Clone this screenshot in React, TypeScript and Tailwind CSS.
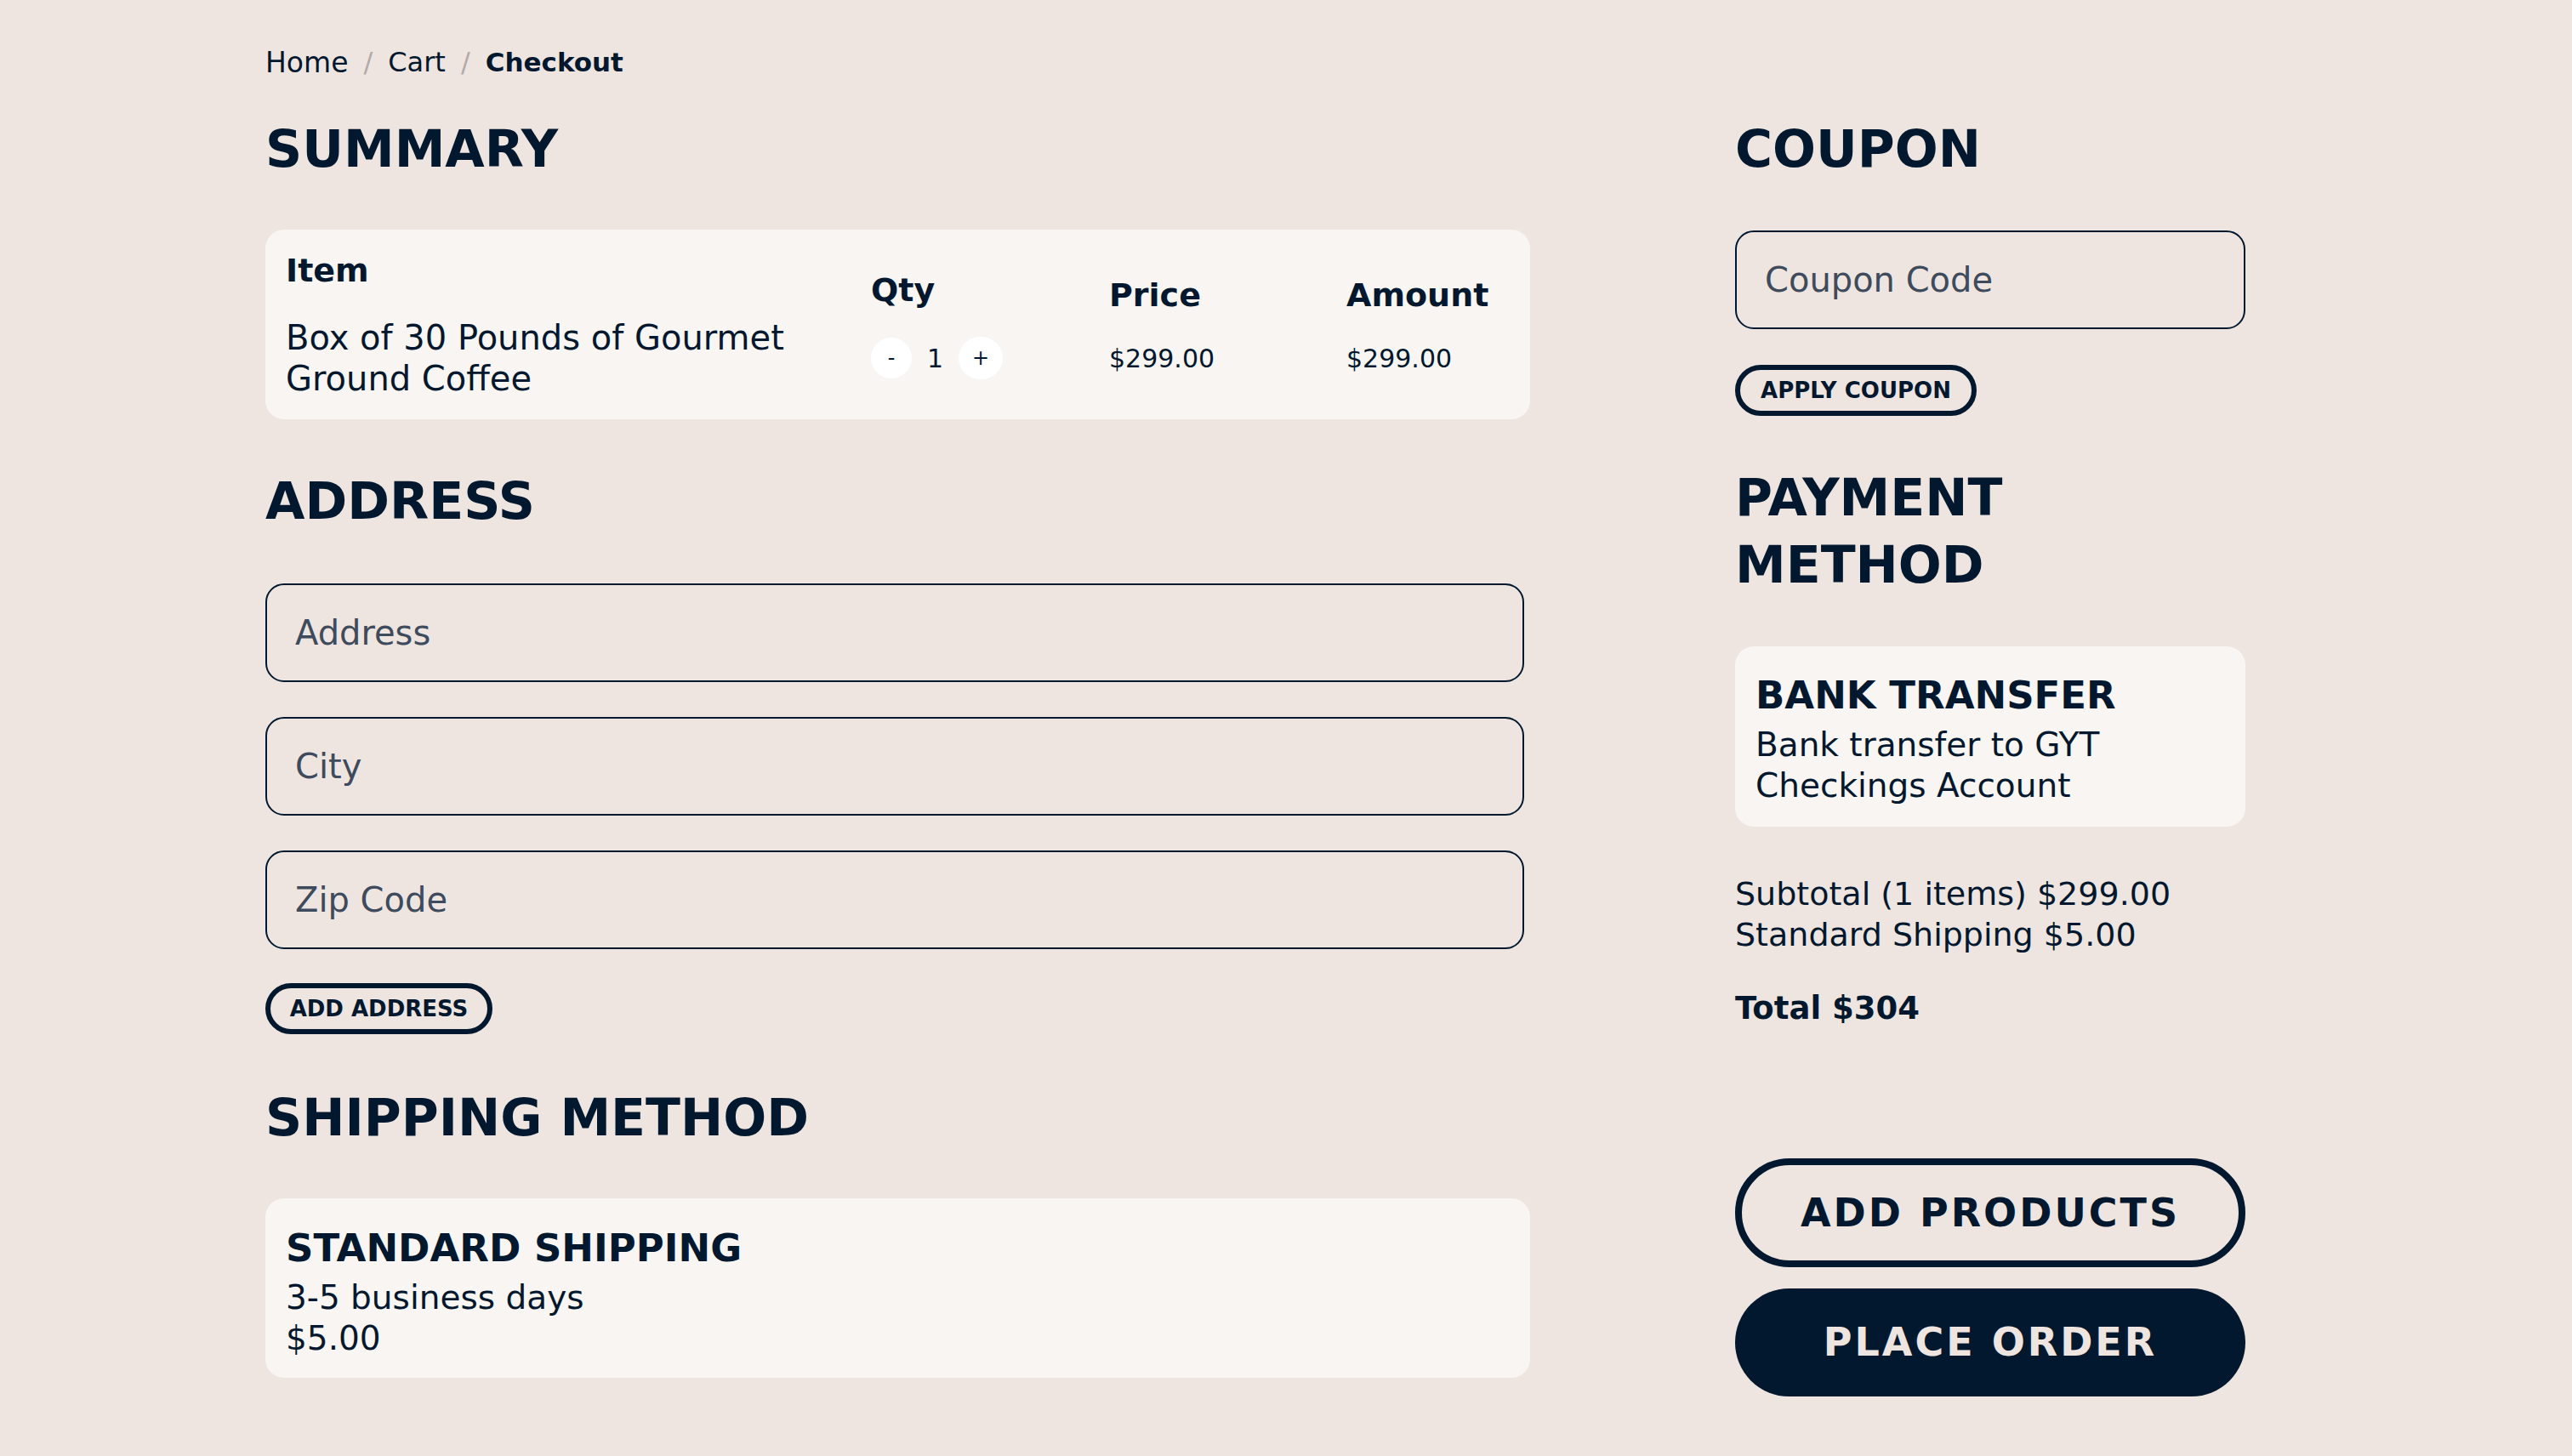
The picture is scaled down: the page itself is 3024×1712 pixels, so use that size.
import React from "react";

const font = { fontFamily: '"DejaVu Sans", "Noto Sans", sans-serif' };

const Heading: React.FC<{ children: React.ReactNode; className?: string }> = ({
  children,
  className = "",
}) => (
  <h2 className={`text-[60px] font-bold leading-[78px] text-[#02182e] ${className}`}>
    {children}
  </h2>
);

const Field: React.FC<{ placeholder: string; className?: string }> = ({
  placeholder,
  className = "",
}) => (
  <input
    placeholder={placeholder}
    className={`h-[116px] rounded-[22px] border-2 border-[#02182e] bg-transparent px-[33px] text-[40px] text-[#02182e] outline-none placeholder:text-[#3d4b5c] ${className}`}
  />
);

const PillButton: React.FC<{ children: React.ReactNode; className?: string }> = ({
  children,
  className = "",
}) => (
  <button
    className={`flex h-[60px] items-center justify-center whitespace-nowrap rounded-full border-[6px] border-[#02182e] text-[26px] font-bold text-[#02182e] ${className}`}
  >
    {children}
  </button>
);

export default function App() {
  return (
    <div
      className="min-h-[1712px] w-full bg-[#efe5e0] pl-[312px] pt-[54px] text-[#02182e]"
      style={font}
    >
      {/* breadcrumb */}
      <nav className="flex items-center gap-[18px] text-[32px] leading-[39px]">
        <span className="text-[33px]">Home</span>
        <span className="text-[#b3aba8]">/</span>
        <span>Cart</span>
        <span className="text-[#b3aba8]">/</span>
        <span className="text-[31px] font-bold">Checkout</span>
      </nav>

      <div className="mt-[43px] flex gap-[241px]">
        {/* left column */}
        <div className="flex w-[1487px] flex-col">
          <Heading>SUMMARY</Heading>
          <div className="mt-[56px] rounded-[22px] bg-[#f9f5f2] px-[24px] py-[24px]">
            <div className="grid grid-cols-[688px_280px_279px_1fr] items-center">
              <div className="flex flex-col gap-[30px]">
                <span className="text-[38px] font-bold leading-[49px]">Item</span>
                <span className="text-[40px] leading-[48px]">
                  Box of 30 Pounds of Gourmet
                  <br />
                  Ground Coffee
                </span>
              </div>
              <div className="flex flex-col gap-[30px]">
                <span className="text-[38px] font-bold leading-[49px]">Qty</span>
                <div className="flex items-center gap-[18px]">
                  <button className="flex h-[48px] w-[48px] items-center justify-center rounded-full bg-white text-[24px]">
                    -
                  </button>
                  <span className="text-[30px]">1</span>
                  <button className="flex h-[50px] w-[52px] items-center justify-center rounded-full bg-white text-[24px]">
                    +
                  </button>
                </div>
              </div>
              <div className="flex flex-col gap-[31px]">
                <span className="text-[38px] font-bold leading-[49px]">Price</span>
                <span className="text-[30px] leading-[37px]">$299.00</span>
              </div>
              <div className="flex flex-col gap-[31px]">
                <span className="text-[38px] font-bold leading-[49px]">Amount</span>
                <span className="text-[30px] leading-[37px]">$299.00</span>
              </div>
            </div>
          </div>

          <Heading className="mt-[57px]">ADDRESS</Heading>
          <div className="mt-[58px] flex flex-col gap-[41px]">
            <Field placeholder="Address" className="w-[1480px]" />
            <Field placeholder="City" className="w-[1480px]" />
            <Field placeholder="Zip Code" className="w-[1480px]" />
          </div>
          <div className="mt-[40px] flex">
            <PillButton className="w-[267px]">ADD ADDRESS</PillButton>
          </div>

          <Heading className="mt-[59px]">SHIPPING METHOD</Heading>
          <div className="mt-[56px] rounded-[22px] bg-[#f9f5f2] px-[24px] pb-[22px] pt-[31px]">
            <div className="text-[45px] font-bold leading-[55px]">STANDARD SHIPPING</div>
            <div className="mt-[7px] text-[39px] leading-[48px]">
              3-5 business days
              <br />
              $5.00
            </div>
          </div>
        </div>

        {/* right column */}
        <div className="flex w-[600px] flex-col">
          <Heading>COUPON</Heading>
          <Field placeholder="Coupon Code" className="mt-[57px] w-[600px]" />
          <div className="mt-[42px] flex">
            <PillButton className="h-[58px] w-[284px]">APPLY COUPON</PillButton>
          </div>

          <h2 className="mt-[57px] text-[60px] font-bold leading-[79px]">
            PAYMENT
            <br />
            METHOD
          </h2>
          <div className="mt-[56px] rounded-[22px] bg-[#f9f5f2] px-[24px] pb-[24px] pt-[30px]">
            <div className="text-[45px] font-bold leading-[55px]">BANK TRANSFER</div>
            <div className="mt-[7px] text-[39px] leading-[48px]">
              Bank transfer to GYT
              <br />
              Checkings Account
            </div>
          </div>

          <div className="mt-[55px] text-[38px] leading-[48px]">
            <div>Subtotal (1 items) $299.00</div>
            <div>Standard Shipping $5.00</div>
          </div>
          <div className="mt-[39px] text-[37px] font-bold leading-[48px]">Total $304</div>

          <button className="mt-[152px] flex h-[128px] w-[600px] items-center justify-center rounded-full border-[8px] border-[#02182e] text-[46px] font-bold tracking-[3px] text-[#02182e]">
            ADD PRODUCTS
          </button>
          <button className="mt-[25px] flex h-[127px] w-[600px] items-center justify-center rounded-full bg-[#02182e] text-[46px] font-bold tracking-[3px] text-[#efe5e0]">
            PLACE ORDER
          </button>
        </div>
      </div>
    </div>
  );
}
